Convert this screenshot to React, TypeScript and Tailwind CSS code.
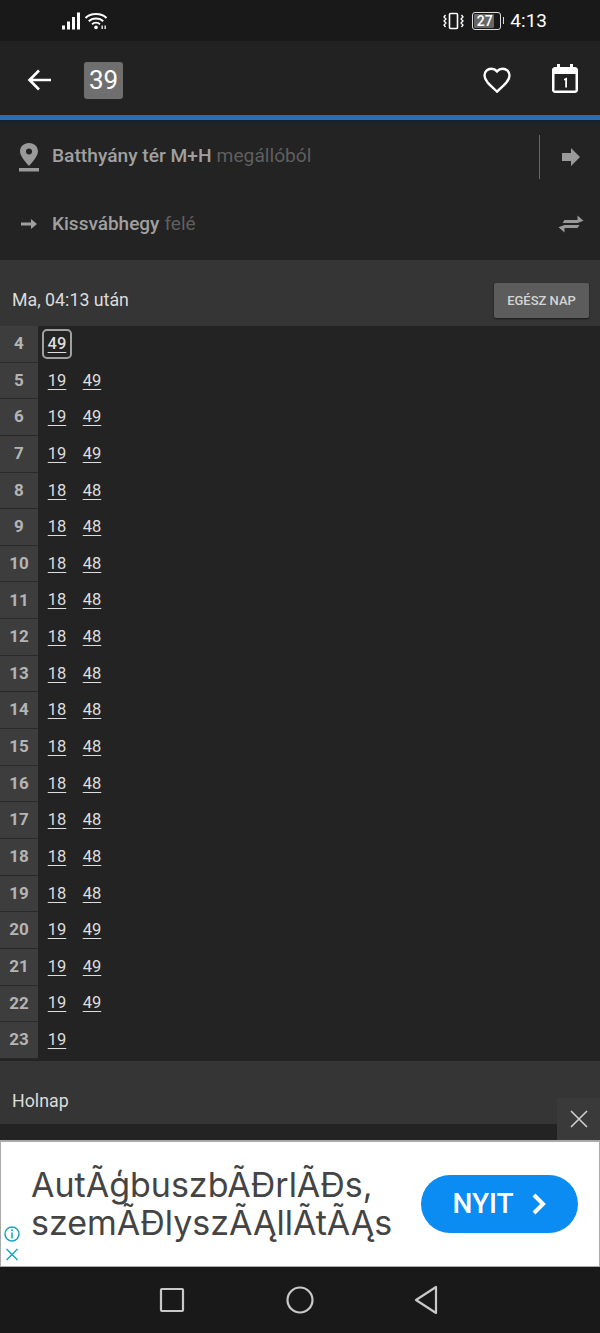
const rows: [number, number[]][] = [
  [4, [49]], [5, [19, 49]], [6, [19, 49]], [7, [19, 49]], [8, [18, 48]], [9, [18, 48]], [10, [18, 48]],
  [11, [18, 48]], [12, [18, 48]], [13, [18, 48]], [14, [18, 48]], [15, [18, 48]], [16, [18, 48]],
  [17, [18, 48]], [18, [18, 48]], [19, [18, 48]], [20, [19, 49]], [21, [19, 49]], [22, [19, 49]], [23, [19]],
];

export default function App() {
  return (
    <div className="relative flex h-[1333px] w-[600px] flex-col overflow-hidden bg-[#232323] font-['Roboto',sans-serif] text-[#e0e0e0]">
      {/* status bar */}
      <div className="flex h-[41px] shrink-0 items-center bg-[#191919] text-white">
        <svg width="46" height="18" viewBox="0 0 46 18" className="ml-[62px]" fill="currentColor">
          <rect x="0" y="13.5" width="3" height="4" /><rect x="5" y="9.5" width="3" height="8" />
          <rect x="10" y="5" width="3" height="12.5" /><rect x="15" y="0.5" width="3" height="17" />
          <path d="M23.5 6C28.5 0.6 39.5 0.6 44.5 6" fill="none" stroke="currentColor" strokeWidth="2" />
          <path d="M26.8 9.2C30.5 5.6 37.5 5.6 41.2 9.2" fill="none" stroke="currentColor" strokeWidth="2" />
          <path d="M30 12.2C32.3 10.2 35.7 10.2 38 12.2" fill="none" stroke="currentColor" strokeWidth="1.8" />
          <circle cx="34" cy="15.4" r="1.8" /><rect x="39.5" y="13.5" width="1.3" height="3.5" /><rect x="42.5" y="13.5" width="1.3" height="3.5" />
        </svg>
        <div className="ml-auto mr-[53px] flex items-center">
          <svg width="22" height="18" viewBox="0 0 22 18" fill="none" stroke="currentColor" strokeWidth="1.3">
            <rect x="6.5" y="1.5" width="8" height="15" rx="1" strokeWidth="1.6" />
            <path d="M2.5 3L1 5L3 7L1 9L3 11L1 13L2.5 15M18.5 3L20 5L18 7L20 9L18 11L20 13L18.5 15" />
          </svg>
          <div className="ml-[7px] flex h-[18px] w-[29px] items-center rounded-[3px] border border-[#ddd] p-[1px]">
            <div className="flex h-full w-[20px] items-center rounded-[1px] bg-[#666] pl-[3px]">
              <span className="text-[14px] font-medium leading-none">27</span>
            </div>
          </div>
          <div className="ml-[2px] h-[7px] w-[1.5px] bg-[#ddd]" />
          <span className="ml-[6px] text-[19px] leading-none">4:13</span>
        </div>
      </div>

      {/* app bar */}
      <div className="flex h-[74px] shrink-0 items-center bg-[#222222] pt-[4px]">
        <svg width="26" height="24" viewBox="0 0 26 24" className="ml-[27px]" fill="none" stroke="white" strokeWidth="2.6">
          <path d="M24 12H3M12 2.5L2.5 12L12 21.5" />
        </svg>
        <div className="ml-[31px] flex h-[37px] w-[39px] items-center justify-center rounded-[3px] bg-[#6f6f6f] text-[26px] text-white">39</div>
        <svg width="30" height="28" viewBox="0 0 24 22" className="ml-auto" fill="none" stroke="white" strokeWidth="1.9">
          <path d="M12 20.3L10.6 19C5.4 14.3 2 11.2 2 7.4C2 4.3 4.4 2 7.5 2C9.2 2 10.9 2.8 12 4.1C13.1 2.8 14.8 2 16.5 2C19.6 2 22 4.3 22 7.4C22 11.2 18.6 14.3 13.4 19Z" />
        </svg>
        <svg width="26" height="30" viewBox="0 0 26 30" className="ml-[40px] mr-[22px] -translate-y-[1px]">
          <path d="M5 0H8V3H18V0H21V3H23C24.6 3 26 4.4 26 6V26C26 27.6 24.6 29 23 29H3C1.4 29 0 27.6 0 26V6C0 4.4 1.4 3 3 3H5Z" fill="white" />
          <rect x="2.5" y="10" width="21" height="16.5" fill="#222222" />
          <path d="M12 15L14.2 13.8H15V23.5H13.2V16L12 16.6Z" fill="white" />
        </svg>
      </div>
      <div className="h-[5px] shrink-0 bg-[#2b6cb5]" />
      <div className="h-[3px] shrink-0 bg-[#16222c]" />

      {/* direction */}
      <div className="flex h-[137px] shrink-0 flex-col">
        <div className="flex h-[67px] items-center">
          <svg width="24" height="32" viewBox="0 0 24 32" className="ml-[17px]" fill="#9a9a9a">
            <path fillRule="evenodd" d="M12 2C6.5 2 3 6 3 10.5C3 16 12 25 12 25C12 25 21 16 21 10.5C21 6 17.5 2 12 2ZM12 7.5A3 3 0 1 1 12 13.5A3 3 0 1 1 12 7.5Z" />
            <rect x="2" y="27" width="20" height="3.5" />
          </svg>
          <span className="ml-[11px] text-[19.2px] font-medium text-[#a0a0a0]">Batthyány tér M+H</span>
          <span className="ml-[5px] text-[19.2px] text-[#5f5f5f]">megállóból</span>
          <div className="ml-auto h-[44px] w-px bg-[#666]" />
          <svg width="20" height="20" viewBox="0 0 20 20" className="ml-[21px] mr-[19px]" fill="#9a9a9a">
            <path d="M1 6H10V1L19 10L10 19V14H1Z" />
          </svg>
        </div>
        <div className="flex h-[68px] items-center">
          <svg width="16" height="12" viewBox="0 0 16 12" className="ml-[21px]" fill="#a0a0a0">
            <path d="M0 4.5H10V1L16 6L10 11V7.5H0Z" />
          </svg>
          <span className="ml-[15px] text-[19px] font-medium text-[#a0a0a0]">Kissvábhegy</span>
          <span className="ml-[5px] text-[19px] text-[#5f5f5f]">felé</span>
          <svg width="26" height="20" viewBox="0 0 26 20" className="ml-auto mr-[16px]" fill="#9a9a9a">
            <path d="M6.5 6H19.5V1.5L25.5 6.8L19.5 9H4.5Z" />
            <path d="M19.5 14H6.5V18.5L0.5 13.2L6.5 11H21.5Z" />
          </svg>
        </div>
      </div>

      {/* today header */}
      <div className="flex h-[66px] shrink-0 items-center justify-between bg-[#353535] pl-3 pr-[11px] pt-[15px]">
        <span className="text-[17.8px] text-[#dcdcdc]">Ma, 04:13 után</span>
        <div className="flex h-[35px] w-[95px] items-center justify-center rounded-[2px] bg-[#5c5c5c] text-[13px] font-medium text-[#d4d4d4] shadow-[0_1px_2px_rgba(0,0,0,0.5)]">EGÉSZ NAP</div>
      </div>

      {/* timetable */}
      <div className="flex flex-col pb-[2px]">
        {rows.map(([h, mins], i) => (
          <div key={h} className="flex h-[36.65px] shrink-0">
            <div className="flex w-[38px] items-center justify-center border-b border-[#2a2a2a] bg-[#3d3d3d] text-[17px] font-bold text-[#b4b4b4]">{h}</div>
            <div className="flex items-center">
              {mins.map((m, j) => (
                <span
                  key={m}
                  className={`flex h-[30px] w-[30px] items-center justify-center text-[16.5px] text-[#dddddd] underline underline-offset-[3px] ${j === 0 ? "ml-[4px]" : "ml-[5px]"} ${i === 0 ? "rounded-[5px] border-2 border-[#a0a0a0] font-medium" : ""}`}
                >
                  {m}
                </span>
              ))}
            </div>
          </div>
        ))}
      </div>

      {/* tomorrow header */}
      <div className="flex h-[63px] shrink-0 items-center bg-[#353535] pl-3 pt-[19px] text-[17.8px] text-[#dcdcdc]">Holnap</div>

      {/* close ad */}
      <div className="absolute left-[557px] top-[1098px] flex h-[42px] w-[43px] items-center justify-center bg-[#3a3a3a]">
        <svg width="20" height="20" viewBox="0 0 20 20" fill="none" stroke="#d0d0d0" strokeWidth="1.6">
          <path d="M2 2L18 18M18 2L2 18" />
        </svg>
      </div>

      <div className="grow" />

      {/* ad */}
      <div className="relative flex h-[127px] shrink-0 items-center border border-t-[2px] border-[#aaa] bg-white">
        <div className="ml-[30px] font-['Inter',sans-serif] text-[34px] leading-[38px] text-[#444]">
          <div>AutÃģbuszbÃĐrlÃĐs,</div>
          <div>szemÃĐlyszÃĄllÃtÃĄs</div>
        </div>
        <div className="ml-auto mr-[21px] flex h-[58px] w-[157px] items-center justify-center gap-[17px] rounded-full bg-[#0a8cf2] text-white">
          <span className="text-[28px] font-medium">NYIT</span>
          <svg width="16" height="22" viewBox="0 0 16 22" fill="none" stroke="white" strokeWidth="4">
            <path d="M3 2L12 11L3 20" />
          </svg>
        </div>
        <svg width="18" height="40" viewBox="0 0 18 40" className="absolute bottom-[1px] left-[2px]" fill="none" stroke="#1fa6b8" strokeWidth="1.5">
          <circle cx="9" cy="9" r="7" />
          <rect x="8.2" y="7.5" width="1.6" height="6" fill="#1fa6b8" stroke="none" />
          <circle cx="9" cy="5.2" r="1" fill="#1fa6b8" stroke="none" />
          <path d="M3.5 24L14.5 35M14.5 24L3.5 35" />
        </svg>
      </div>

      {/* nav bar */}
      <div className="flex h-[66px] shrink-0 items-center bg-[#191919]">
        <svg width="26" height="26" viewBox="0 0 26 26" className="ml-[159px]" fill="none" stroke="#c8c8c8" strokeWidth="2.2">
          <rect x="2" y="2" width="22" height="22" rx="1" />
        </svg>
        <svg width="28" height="28" viewBox="0 0 28 28" className="ml-[101px]" fill="none" stroke="#c8c8c8" strokeWidth="2.2">
          <circle cx="14" cy="14" r="12.5" />
        </svg>
        <svg width="26" height="30" viewBox="0 0 26 30" className="ml-[99px]" fill="none" stroke="#c8c8c8" strokeWidth="2.2" strokeLinejoin="round">
          <path d="M23 2V28L3 15Z" />
        </svg>
      </div>
    </div>
  );
}
